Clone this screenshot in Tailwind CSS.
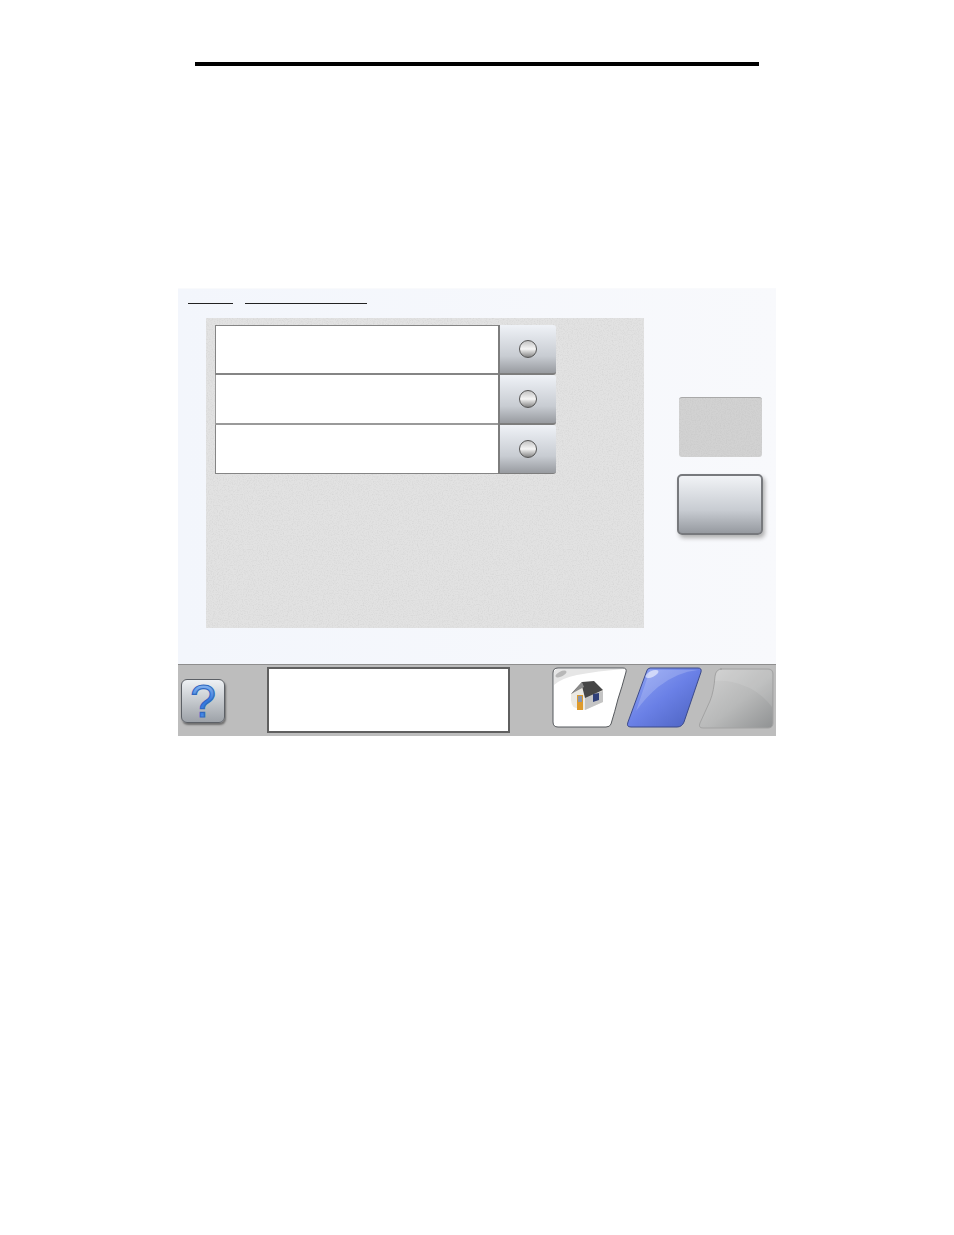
<!DOCTYPE html>
<html lang="en">
<head>
    <meta charset="UTF-8">
    <title>Touch screen</title>
    <script src="https://cdn.jsdelivr.net/npm/@tailwindcss/browser@4"></script>
</head>
<body class="bg-white min-h-[1235px] pt-[62px] overflow-hidden">
    <!-- shared speckle filter -->
    <svg class="absolute w-0 h-0">
        <filter id="speckle">
            <feTurbulence type="fractalNoise" baseFrequency="0.8" numOctaves="2" seed="4"/>
            <feColorMatrix type="matrix" values="0 0 0 0 0.45  0 0 0 0 0.45  0 0 0 0 0.45  0 0 0 1.3 -0.55"/>
        </filter>
    </svg>

    <!-- Page rule -->
    <div class="ml-[195px] w-[564px] h-1 bg-black"></div>

    <!-- Screen -->
    <div class="ml-[178px] mt-[222px] w-[598px] h-[448px] flex flex-col">
        <div class="h-[376px] bg-gradient-to-r from-[#f3f6fc] to-[#f8f9fc] border-t border-[#f9fafc]">
            <!-- Breadcrumb -->
            <div class="flex gap-3 pl-[10px] h-[15px]">
                <span class="w-[45px] h-[15px] border-b border-[#222]"></span>
                <span class="w-[122px] h-[15px] border-b border-[#222]"></span>
            </div>

            <div class="flex mt-[14px]">
                <div class="relative ml-[28px] w-[438px] h-[310px] bg-[#e2e2e2] pt-[7px] pl-[9px]">
                    <svg class="absolute inset-0 w-full h-full opacity-40"><rect width="100%" height="100%" filter="url(#speckle)"/></svg>
                    <div class="relative w-[341px] flex flex-col">
                        <div class="flex h-[50px]">
                            <div class="w-[283px] bg-white border border-b-2 border-[#858585] border-r-0"></div>
                            <div class="w-[58px] flex items-center justify-center rounded-tr-[3px] rounded-br-[3px] border-l-2 border-b-2 border-[#7d7d7d] bg-gradient-to-b from-[#eff2f7] via-[#c8ccd2] via-65% to-[#989ba0]">
                                <div class="w-[18px] h-[18px] rounded-full border border-[#555] bg-gradient-to-b from-[#c4c4c4] via-[#f6f6f6] to-[#858585]"></div>
                            </div>
                        </div>
                        <div class="flex h-[50px]">
                            <div class="w-[283px] bg-white border-l border-b-2 border-[#9a9a9a]"></div>
                            <div class="w-[58px] flex items-center justify-center rounded-tr-[3px] rounded-br-[3px] border-l-2 border-b-2 border-[#7d7d7d] bg-gradient-to-b from-[#eff2f7] via-[#c8ccd2] via-65% to-[#989ba0]">
                                <div class="w-[18px] h-[18px] rounded-full border border-[#555] bg-gradient-to-b from-[#c4c4c4] via-[#f6f6f6] to-[#858585]"></div>
                            </div>
                        </div>
                        <div class="flex h-[49px]">
                            <div class="w-[283px] bg-white border-l border-b border-[#858585]"></div>
                            <div class="w-[58px] flex items-center justify-center rounded-tr-[3px] rounded-br-[3px] border-l-2 border-b border-[#7d7d7d] bg-gradient-to-b from-[#eff2f7] via-[#c8ccd2] via-65% to-[#989ba0]">
                                <div class="w-[18px] h-[18px] rounded-full border border-[#555] bg-gradient-to-b from-[#c4c4c4] via-[#f6f6f6] to-[#858585]"></div>
                            </div>
                        </div>
                    </div>
                </div>

                <!-- Right buttons -->
                <div class="ml-[33px] pt-[79px] flex flex-col">
                    <div class="relative overflow-hidden ml-[2px] w-[83px] h-[60px] rounded-[3px] bg-[#d2d2d2] border-t border-[#a9a9a9]">
                        <svg class="absolute inset-0 w-full h-full opacity-40"><rect width="100%" height="100%" filter="url(#speckle)"/></svg>
                    </div>
                    <div class="mt-[17px] w-[86px] h-[61px] rounded-[5px] border-2 border-[#77797d] bg-gradient-to-b from-[#f1f3f6] via-[#c8ccd2] via-60% to-[#969aa0] shadow-[2px_3px_4px_#b0b0b0]"></div>
                </div>
            </div>
        </div>

        <!-- Bottom bar -->
        <div class="h-[72px] bg-[#bdbdbd] border-t border-[#8e8e8e] flex">
            <div class="ml-[3px] mt-[14px] w-[44px] h-[44px] rounded-[6px] border border-[#5c6066] bg-gradient-to-b from-[#eef1f4] to-[#9da2a8] shadow-[1px_2px_2px_#6f6f6f] flex items-center justify-center">
                <svg class="w-[40px] h-[42px] overflow-visible" viewBox="0 0 40 42">
                    <defs>
                        <linearGradient id="q" x1="0" y1="0" x2="0" y2="1">
                            <stop offset="0" stop-color="#b4d6f6"/>
                            <stop offset="0.5" stop-color="#3478e0"/>
                            <stop offset="0.75" stop-color="#3f82e4"/>
                            <stop offset="1" stop-color="#8fc0f0"/>
                        </linearGradient>
                    </defs>
                    <text x="20" y="37" text-anchor="middle" font-family="'Liberation Sans', sans-serif" font-weight="400" font-size="46" fill="url(#q)" stroke="#2f68c0" stroke-width="1.2">?</text>
                </svg>
            </div>
            <div class="ml-[42px] mt-[2px] w-[243px] h-[66px] bg-white border-2 border-[#5f5f5f]"></div>

            <!-- Tabs -->
            <svg class="ml-[42px] mt-[2px] w-[224px] h-[64px]" viewBox="0 0 224 64">
                <defs>
                    <linearGradient id="blue" x1="0" y1="0" x2="1" y2="1">
                        <stop offset="0" stop-color="#93a8f6"/>
                        <stop offset="0.5" stop-color="#6a80e6"/>
                        <stop offset="1" stop-color="#4a60bd"/>
                    </linearGradient>
                    <linearGradient id="grey" x1="0" y1="0" x2="1" y2="1">
                        <stop offset="0" stop-color="#d2d2d2"/>
                        <stop offset="0.55" stop-color="#b8b9b9"/>
                        <stop offset="1" stop-color="#909293"/>
                    </linearGradient>
                </defs>
                <!-- home tab -->
                <path d="M6 1 H71 Q75 1 74 5 Q70 20 66 32 Q63 44 59 57 Q58 60 54 60 H6 Q1 60 1 55 V6 Q1 1 6 1 Z" fill="#fff" stroke="#55585c" stroke-width="1"/>
                <path d="M2 18 V6 Q2 2 6 2 H72 Q45 4 25 8 Q10 11 2 18 Z" fill="#e6e6e6"/>
                <ellipse cx="9" cy="7" rx="6" ry="2.5" transform="rotate(-25 9 7)" fill="#b8b8b8"/>
                <!-- house -->
                <path d="M19 27 Q18 40 24 41 L33 43 L51 35 L51 23 L30 15 Z" fill="#eceae4"/>
                <path d="M33 29 L51 24 L51 35 L33 43 Z" fill="#c4c4c4"/>
                <path d="M30 15 L42 14 L51 23 L33 31 L30 19 L19 27 Z" fill="#464646"/>
                <path d="M19 27 L30 15 L32 20 Z" fill="#8c8c8c"/>
                <rect x="25" y="28" width="6" height="15" fill="#dd9a2c"/>
                <rect x="26" y="29" width="4" height="6" fill="#8a94a8"/>
                <path d="M41 27 L47 26 L47 33 L41 35 Z" fill="#2f3f78"/>
                <!-- blue tab -->
                <path d="M98 1 H146 Q150 1 149 5 L132 55 Q130 60 125 60 H79 Q74 60 76 55 L94 6 Q95 1 98 1 Z" fill="url(#blue)" stroke="#3c4a8a" stroke-width="1"/>
                <path d="M98 3 H146 Q125 5 106 20 Q94 30 84 44 Z" fill="#fff" opacity="0.18"/>
                <ellipse cx="100" cy="7" rx="7" ry="3" transform="rotate(-25 100 7)" fill="#fff" opacity="0.55"/>
                <!-- grey tab -->
                <path d="M168 2 H216 Q221 2 221 7 V56 Q221 61 216 61 H151 Q146 61 148 56 L158 34 Q162 24 163 9 Q164 2 170 2 Z" fill="url(#grey)" stroke="#a3a3a3" stroke-width="1"/>
                <path d="M168 3 H216 Q220 3 220 7 V40 Q205 20 180 15 Q170 13 163 14 Q164 3 168 3 Z" fill="#fff" opacity="0.1"/>
            </svg>
        </div>
    </div>
</body>
</html>
